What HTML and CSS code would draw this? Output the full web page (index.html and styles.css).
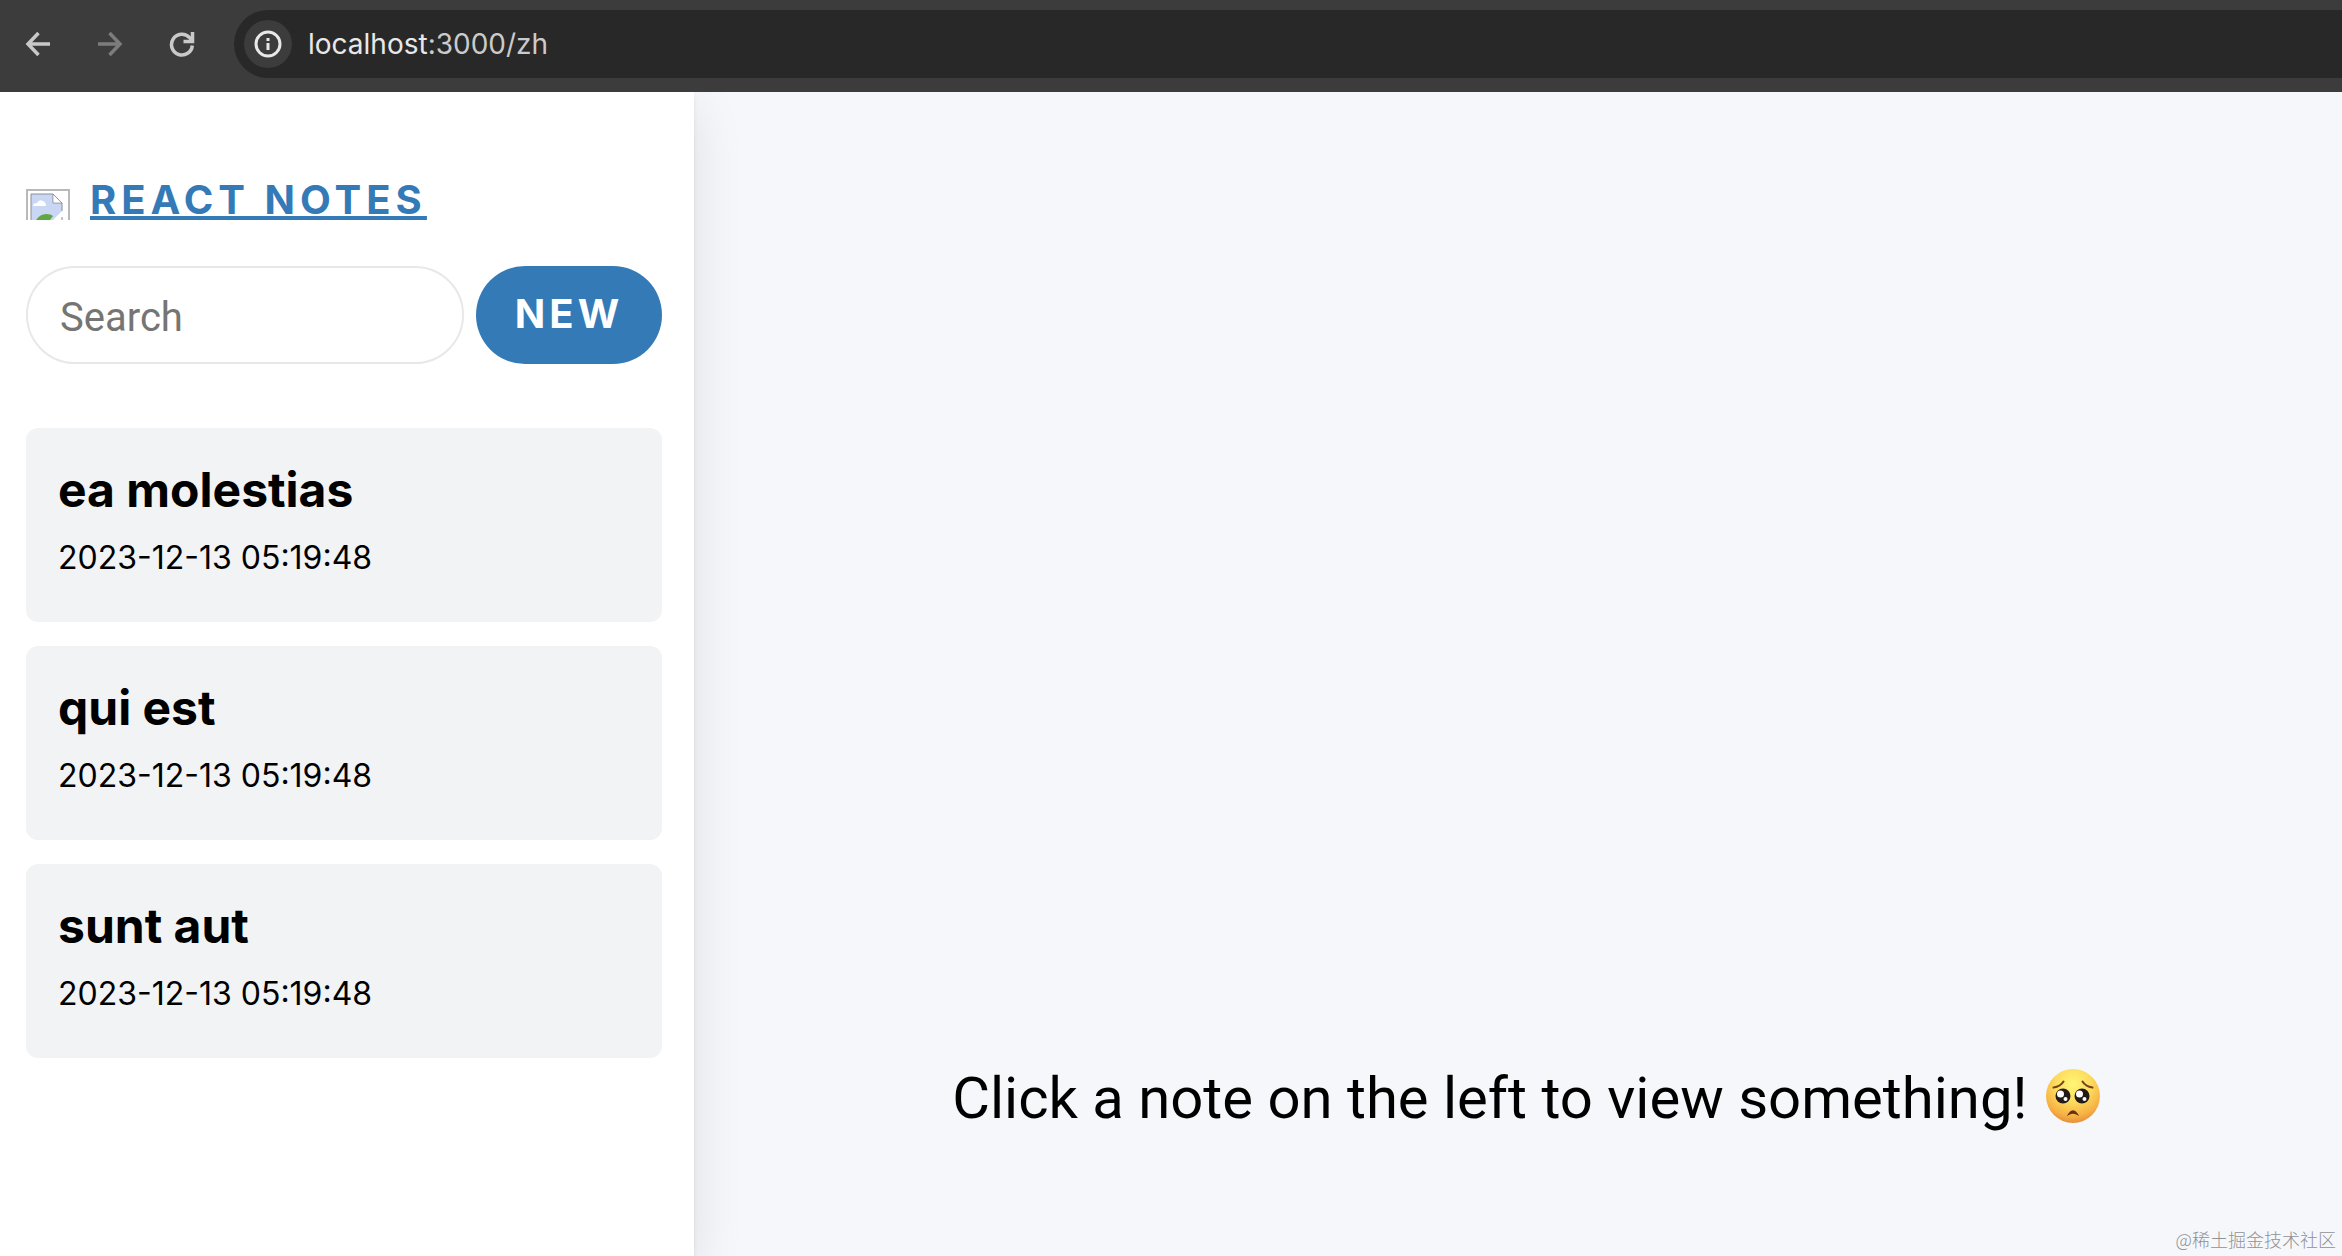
FILE: index.html
```html
<!DOCTYPE html>
<html lang="en">
<head>
<meta charset="utf-8">
<title>React Notes</title>
<link rel="stylesheet" href="styles.css">
</head>
<body>
<header class="toolbar">
  <nav class="nav-buttons" aria-label="Browser">
    <button class="nav-button" type="button" aria-label="Back">
      <svg viewBox="0 0 28 28"><path d="M26 14H5M14.500 3 4 14l10.500 11"/></svg>
    </button>
    <button class="nav-button" type="button" aria-label="Forward" disabled>
      <svg viewBox="0 0 28 28"><path d="M2 14h21M13.500 3 24 14 13.500 25"/></svg>
    </button>
    <button class="nav-button" type="button" aria-label="Reload">
      <svg viewBox="0 0 28 28"><path d="M24.300 15.500A10.400 10.400 0 1 1 21.500 7.500L24 10"/><path d="M24.500 2v9.500h-9"/></svg>
    </button>
  </nav>
  <div class="address-bar">
    <button class="site-info" type="button" aria-label="Site information">
      <svg viewBox="0 0 30 30"><circle cx="15" cy="15" r="12"/><path d="M15 14v7M15 9v3"/></svg>
    </button>
    <p class="url">localhost<span class="url-path">:3000/zh</span></p>
  </div>
</header>
<div class="main">
  <section class="sidebar">
    <a class="brand" href="/">
      <svg class="brand-logo" viewBox="0 0 44 31" aria-hidden="true">
        <path class="frame" d="M1 31V1h42v30"/>
        <path class="sheet" d="M5 31V5h22l9 9v8l-9 9z"/>
        <path class="cloud" d="M7 17q0-3 4-3 2-4 6-2 3 1 3 5z"/>
        <path class="hill" d="M10 31q4-6 10-6 5 0 7 2l-3 4z"/>
        <path class="outline" d="M5 31V5h22l9 9v8M27 5v9h9M36 28v3"/>
        <path class="fold" d="M27.500 6v7.500H35z"/>
      </svg>
      <strong class="brand-name">REACT NOTES</strong>
    </a>
    <form class="menu" role="search">
      <input class="search" type="search" placeholder="Search" aria-label="Search notes">
      <button class="new-note" type="button">NEW</button>
    </form>
    <ul class="notes">
      <li><a class="note" href="/note/1"><strong class="note-title">ea molestias</strong><small class="note-date">2023-12-13 05:19:48</small></a></li>
      <li><a class="note" href="/note/2"><strong class="note-title">qui est</strong><small class="note-date">2023-12-13 05:19:48</small></a></li>
      <li><a class="note" href="/note/3"><strong class="note-title">sunt aut</strong><small class="note-date">2023-12-13 05:19:48</small></a></li>
    </ul>
  </section>
  <main class="viewer">
    <p class="empty-text">Click a note on the left to view something!
      <svg class="face" viewBox="0 0 54 54" role="img" aria-label="pleading face">
        <defs>
          <radialGradient id="skin" cx="50%" cy="28%" r="74%">
            <stop offset="0" stop-color="#fff676"/><stop offset=".45" stop-color="#fddb5c"/><stop offset=".8" stop-color="#f6b144"/><stop offset="1" stop-color="#e38a35"/>
          </radialGradient>
        </defs>
        <circle cx="27" cy="27" r="27" fill="url(#skin)"/>
        <path class="brow" d="M7.500 18.500q7-1 10-6M46.500 18.500q-7-1-10-6"/>
        <circle cx="17" cy="27" r="7.500" fill="#241a16"/><circle cx="36" cy="27" r="7.500" fill="#241a16"/>
        <circle cx="14.500" cy="25" r="3.500" fill="#fff"/><circle cx="33.500" cy="25" r="3.500" fill="#fff"/>
        <circle cx="19.500" cy="30" r="2" fill="#fff"/><circle cx="38.500" cy="30" r="2" fill="#fff"/>
        <path d="M23 45q4-6 8 0-4-2-8 0z" stroke="#633018" stroke-width="1.500" fill="#633018"/>
      </svg>
    </p>
    <p class="watermark" lang="zh">@稀土掘金技术社区</p>
  </main>
</div>
</body>
</html>
```
FILE: styles.css
```css
* { box-sizing: border-box; }
body {
  margin: 0;
  min-height: 100vh;
  display: flex;
  flex-direction: column;
  font-family: Inter, "Liberation Sans", sans-serif;
  color: #000;
  background: #f6f7fb;
}
button { border: 0; padding: 0; font: inherit; }
p { margin: 0; }
.toolbar {
  display: flex;
  align-items: center;
  height: 92px;
  padding: 0 0 4px 24px;
  background: #3c3c3c;
  position: relative;
  z-index: 2;
}
.nav-buttons { display: flex; gap: 44px; margin-right: 38px; }
.nav-button { width: 28px; height: 28px; background: none; color: #c9c9c9; }
.nav-button:disabled { color: #7c7c7c; }
.nav-button svg { display: block; width: 28px; height: 28px; fill: none; stroke: currentColor; stroke-width: 3.5; }
.address-bar {
  flex: 1;
  display: flex;
  align-items: center;
  gap: 16px;
  height: 68px;
  padding-left: 10px;
  border-radius: 34px 0 0 34px;
  background: #282828;
}
.site-info {
  display: grid;
  place-items: center;
  width: 48px;
  height: 48px;
  border-radius: 50%;
  background: #3c3c3c;
  color: #e8e8e8;
}
.site-info svg { width: 30px; height: 30px; fill: none; stroke: currentColor; stroke-width: 3; }
.url { font-size: 28px; line-height: 36px; color: #e8e8e8; }
.url-path { color: #cbcbcb; }
.main { flex: 1; display: flex; }
.sidebar {
  flex: 0 0 694px;
  min-width: 0;
  padding: 84px 32px 32px 26px;
  background: #fff;
  box-shadow: 0 16px 48px rgba(0, 0, 0, .1), 0 4px 4px rgba(0, 0, 0, .08);
  z-index: 1;
}
.brand {
  display: flex;
  align-items: flex-end;
  gap: 20px;
  height: 48px;
  margin-bottom: 42px;
  color: #337ab7;
}
.brand-logo { width: 44px; height: 31px; margin-bottom: 4px; }
.frame { fill: #fff; stroke: #b9b9b9; stroke-width: 2; }
.sheet { fill: #c9d7f4; }
.cloud, .fold { fill: #fff; }
.hill { fill: #62a744; }
.outline { fill: none; stroke: #8a8f96; stroke-width: 1; }
.brand-name {
  font-size: 40px;
  line-height: 48px;
  letter-spacing: 5px;
  text-decoration: underline;
  text-decoration-thickness: 4px;
  text-underline-offset: 2px;
  text-decoration-skip-ink: none;
}
.menu { display: flex; gap: 12px; margin-bottom: 64px; }
.search {
  flex: 1;
  min-width: 0;
  height: 98px;
  padding: 4px 32px 0;
  border: 2px solid #e8e8e8;
  border-radius: 49px;
  background: #fff;
  font: 40px/48px Roboto, "Liberation Sans", sans-serif;
  appearance: none;
}
.search::placeholder { color: #757575; }
.new-note {
  width: 186px;
  height: 98px;
  padding-bottom: 4px;
  border-radius: 49px;
  background: #337ab7;
  color: #fff;
  font-size: 40px;
  font-weight: 700;
  letter-spacing: 4px;
}
.notes { display: grid; gap: 24px; margin: 0; padding: 0; list-style: none; }
.note {
  display: flex;
  flex-direction: column;
  gap: 18px;
  min-height: 194px;
  padding: 32px;
  border-radius: 12px;
  background: #f1f3f5;
  color: inherit;
  text-decoration: none;
}
.note-title { font-size: 48px; line-height: 60px; }
.note-date { font-size: 32px; line-height: 40px; }
.viewer { flex: 1; display: flex; flex-direction: column; justify-content: flex-end; }
.empty-text {
  padding: 0 0 86px 16px;
  font-family: Roboto, "Liberation Sans", sans-serif;
  font-size: 58px;
  line-height: 84px;
  text-align: center;
}
.face { width: 54px; height: 54px; margin-left: 4px; vertical-align: -5px; }
.brow { fill: none; stroke: #75401c; stroke-width: 2; stroke-linecap: round; }
.watermark {
  padding: 0 6px 4px 0;
  font: 300 18px/26px "Noto Sans CJK SC", sans-serif;
  color: #909296;
  text-align: right;
}
```
